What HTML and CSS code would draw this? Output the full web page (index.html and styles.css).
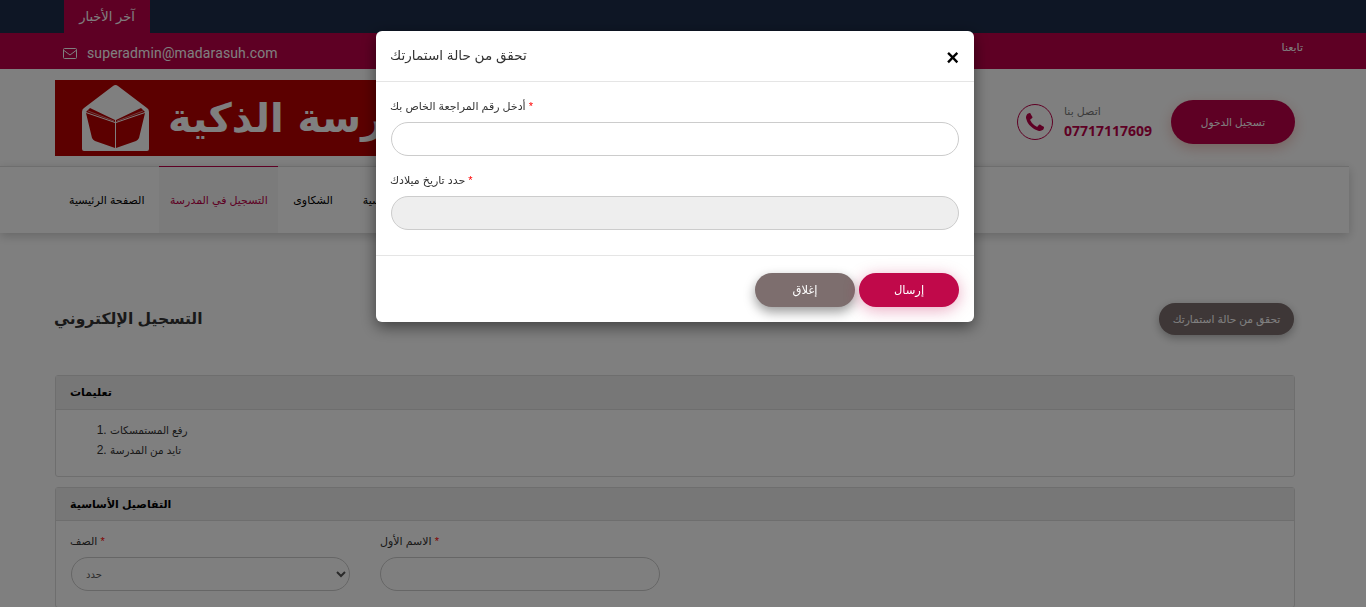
FILE: index.html
```html
<!DOCTYPE html>
<html lang="ar">
<head>
    <meta charset="UTF-8">
    <meta name="viewport" content="width=device-width, initial-scale=1.0">
    <title>التسجيل الإلكتروني</title>
    <link rel="stylesheet" href="styles.css">
</head>
<body>
    <div class="page">
        <div class="news-bar">
            <div class="news-tab">آخر الأخبار</div>
        </div>

        <div class="contact-bar">
            <div class="contact-mail">
                <svg class="mail-icon" viewBox="0 0 14 11"><rect x="0.5" y="0.5" width="13" height="10" rx="1" fill="none" stroke="currentColor"/><path d="M1 2.5 L7 7 L13 2.5" fill="none" stroke="currentColor"/></svg>
                <span>superadmin@madarasuh.com</span>
            </div>
            <div class="follow" dir="rtl">تابعنا</div>
        </div>

        <div class="header">
            <div class="logo">
                <svg class="logo-icon" viewBox="0 0 69 68">
                    <path d="M1 28 Q1 25 3 24 L32 2 Q34.5 0 37 2 L66 24 Q68 25 68 28 V65 Q68 67 66 67 H3 Q1 67 1 65 Z" fill="#fff"/>
                    <path d="M5 29 L34 39 V64 L14 57 Q12 56 11 54 Z M64 29 L35 39 V64 L55 57 Q57 56 58 54 Z" fill="#b80000"/>
                    <path d="M5 28 L9 24 L34 36 V38 Z M64 28 L60 24 L35 36 V38 Z" fill="#b80000"/>
                    <path d="M7 27 L33 37 M62 27 L36 37" stroke="#fff" stroke-width="0.5" fill="none"/>
                </svg>
                <span class="logo-text" dir="rtl">المدرسة الذكية</span>
            </div>
            <div class="header-right">
                <div class="call">
                    <span class="call-circle">
                        <svg class="call-icon" viewBox="0 0 1408 1408"><path fill="currentColor" d="M1408 1112q0 27-10 70.5t-21 68.5q-21 50-122 106-94 51-186 51-27 0-53-3.5t-57.5-12.5-47-14.5-55.5-20.5-49-18q-98-35-175-83-127-79-264-216t-216-264q-48-77-83-175-3-9-18-49t-20.5-55.5-14.5-47-12.5-57.5-3.5-53q0-92 51-186 56-101 106-122 25-11 68.5-21t70.5-10q14 0 21 3 18 6 53 76 11 19 30 54t35 63.5 31 53.5q3 4 17.5 25t21.5 35.5 7 28.5q0 20-28.5 50t-62 55-62 53-28.5 46q0 9 5 22.5t8.5 20.5 14 24 11.5 19q76 137 174 235t235 174q2 1 19 11.5t24 14 20.5 8.5 22.5 5q18 0 46-28.5t53-62 55-62 50-28.5q14 0 28.5 7t35.5 21.5 25 17.5q25 15 53.5 31t63.5 35 54 30q70 35 76 53 3 7 3 21z"/></svg>
                    </span>
                    <div class="call-text">
                        <div class="call-label" dir="rtl">اتصل بنا</div>
                        <div class="call-number">07717117609</div>
                    </div>
                </div>
                <button class="login-btn">تسجيل الدخول</button>
            </div>
        </div>

        <div class="nav">
            <a class="nav-item">الصفحة الرئيسية</a>
            <a class="nav-item active">التسجيل في المدرسة</a>
            <a class="nav-item">الشكاوى</a>
            <a class="nav-item">الرسوم الدراسية</a>
        </div>

        <div class="content">
            <div class="title-row">
                <h1 class="page-title">التسجيل الإلكتروني</h1>
                <button class="check-btn">تحقق من حالة استمارتك</button>
            </div>

            <div class="panel">
                <div class="panel-head tall">تعليمات</div>
                <div class="panel-body">
                    <ol class="steps">
                        <li><span>رفع المستمسكات</span></li>
                        <li><span>تايد من المدرسة</span></li>
                    </ol>
                </div>
            </div>

            <div class="panel">
                <div class="panel-head">التفاصيل الأساسية</div>
                <div class="panel-body fields">
                    <div class="field">
                        <label class="field-label" dir="rtl"><span class="req">*</span> الصف</label>
                        <select class="field-input field-select">
                            <option>حدد</option>
                        </select>
                    </div>
                    <div class="field">
                        <label class="field-label" dir="rtl"><span class="req">*</span> الاسم الأول</label>
                        <input class="field-input" type="text">
                    </div>
                </div>
            </div>
        </div>
    </div>

    <div class="overlay"></div>

    <div class="modal">
        <div class="modal-head">
            <div class="modal-title">تحقق من حالة استمارتك</div>
            <button class="modal-close">×</button>
        </div>
        <div class="modal-body">
            <label class="field-label" dir="rtl"><span class="req">*</span> أدخل رقم المراجعة الخاص بك</label>
            <input class="modal-input" type="text">
            <label class="field-label" dir="rtl"><span class="req">*</span> حدد تاريخ ميلادك</label>
            <input class="modal-input" type="text" disabled>
        </div>
        <div class="modal-foot">
            <button class="foot-btn close-btn">إغلاق</button>
            <button class="foot-btn send-btn">إرسال</button>
        </div>
    </div>
</body>
</html>
```

FILE: styles.css
```css
* {
    margin: 0;
    padding: 0;
    box-sizing: border-box;
}

html, body {
    height: 607px;
    overflow: hidden;
}

body {
    font-family: "Liberation Sans", "DejaVu Sans", sans-serif;
    font-size: 12px;
    color: #333;
    background: #fff;
}

button, input, select {
    font-family: inherit;
}

.page {
    width: 1349px;
}

/* top bars */
.news-bar {
    height: 33px;
    width: 1366px;
    padding-left: 64px;
    background: #1d2d4a;
}

.news-tab {
    width: 86px;
    height: 33px;
    line-height: 34px;
    text-align: center;
    font-size: 13px;
    color: #fff;
    background: #bd0048;
}

.contact-bar {
    display: flex;
    justify-content: space-between;
    align-items: center;
    width: 1366px;
    height: 36px;
    padding: 4px 63px 0;
    background: #bd0048;
    color: #fff;
}

.contact-mail {
    display: flex;
    align-items: center;
    gap: 10px;
    font-family: Roboto, sans-serif;
    font-size: 14px;
    letter-spacing: 0.13px;
}

.mail-icon {
    width: 14px;
    height: 11px;
}

.follow {
    font-size: 11px;
    margin-bottom: 12px;
}

/* header */
.header {
    display: flex;
    justify-content: space-between;
    align-items: flex-start;
    height: 97px;
    padding: 11px 54px 0 55px;
}

.logo {
    display: flex;
    align-items: center;
    width: 420px;
    height: 76px;
    padding-left: 26px;
    gap: 18px;
    background: #b80000;
    overflow: hidden;
}

.logo-icon {
    width: 69px;
    height: 68px;
    flex: none;
}

.logo-text {
    font-family: "DejaVu Sans", sans-serif;
    font-size: 40px;
    font-weight: bold;
    color: #fff;
    white-space: nowrap;
}

.header-right {
    display: flex;
    align-items: center;
    gap: 20px;
    margin-top: 20px;
}

.call {
    display: flex;
    align-items: center;
    gap: 11px;
}

.call-circle {
    display: flex;
    align-items: center;
    justify-content: center;
    width: 36px;
    height: 36px;
    border: 1px solid #bd0048;
    border-radius: 50%;
    color: #bd0048;
}

.call-icon {
    width: 18px;
    height: 18px;
}

.call-text {
    width: 87px;
}

.call-label {
    font-size: 11px;
    color: #777;
    text-align: left;
    margin-bottom: 3px;
}

.call-number {
    font-family: "Open Sans", sans-serif;
    font-size: 14px;
    font-weight: bold;
    color: #bd0048;
}

.login-btn {
    width: 124px;
    height: 44px;
    border: none;
    border-radius: 22px;
    background: #bd0048;
    color: #fff;
    font-size: 10.5px;
    box-shadow: 0 4px 14px rgba(200, 60, 40, 0.3);
}

/* nav */
.nav {
    display: flex;
    height: 67px;
    padding-left: 54px;
    border-top: 1px solid #ddd;
    background: #fff;
    box-shadow: 0 3px 10px rgba(0, 0, 0, 0.2);
}

.nav-item {
    display: block;
    padding: 0 15px;
    line-height: 66px;
    font-size: 11px;
    color: #000;
}

.nav-item.active {
    margin-top: -1px;
    height: 67px;
    padding: 0 10.5px;
    border-top: 1px solid #bd0048;
    background: #f6f6f6;
    color: #bd0048;
}

/* content */
.content {
    padding: 70px 54px 0 55px;
}

.title-row {
    display: flex;
    justify-content: space-between;
    align-items: center;
    margin-bottom: 40px;
}

.page-title {
    margin-left: -1px;
    font-size: 15.6px;
    font-weight: bold;
    color: #333;
}

.check-btn {
    width: 135px;
    height: 32px;
    margin-right: 1px;
    border: none;
    border-radius: 16px;
    background: #7d6e6e;
    color: #fff;
    font-size: 10.7px;
    box-shadow: 0 3px 10px rgba(0, 0, 0, 0.3);
}

.panel {
    margin-bottom: 10px;
    border: 1px solid #ddd;
    border-radius: 3px;
}

.panel-head {
    height: 33px;
    line-height: 32px;
    padding-left: 14px;
    border-bottom: 1px solid #ddd;
    background: #eee;
    font-size: 11px;
    font-weight: bold;
    color: #000;
}

.panel-head.tall {
    height: 34px;
}

.panel-body {
    padding: 10px 14px 16px;
}

.steps {
    padding-left: 40px;
    line-height: 20px;
    font-size: 12px;
}

.steps span {
    font-size: 10.5px;
}

.fields {
    display: flex;
    gap: 30px;
    padding-top: 12px;
}

.field {
    width: 280px;
}

.field-label {
    display: block;
    width: fit-content;
    margin-bottom: 8px;
    font-size: 11px;
    line-height: 16px;
    color: #333;
}

.req {
    color: #f00;
}

.field-input {
    display: block;
    width: 280px;
    height: 34px;
    padding: 0 10px;
    border: 1px solid #ccc;
    border-radius: 17px;
    background: #fff;
    font-size: 10px;
    color: #555;
}

.field-select {
    width: 279px;
    margin-left: 1px;
}

/* modal */
.overlay {
    position: fixed;
    top: 0;
    left: 0;
    width: 100%;
    height: 100%;
    background: rgba(0, 0, 0, 0.5);
}

.modal {
    position: fixed;
    top: 31px;
    left: 376px;
    width: 598px;
    height: 291px;
    border-radius: 6px;
    background: #fff;
    box-shadow: 0 5px 15px rgba(0, 0, 0, 0.5);
}

.modal-head {
    display: flex;
    justify-content: space-between;
    align-items: center;
    height: 51px;
    padding: 0 15px 2px 14px;
    border-bottom: 1px solid #e5e5e5;
}

.modal-title {
    font-size: 13.6px;
    color: #333;
}

.modal-close {
    border: none;
    background: none;
    font-size: 22px;
    font-weight: bold;
    line-height: 1;
    color: #000;
    margin-top: 5px;
}

.modal-body {
    height: 174px;
    padding: 16px 15px 0 14px;
    border-bottom: 1px solid #e5e5e5;
}

.modal-input {
    display: block;
    width: 568px;
    height: 34px;
    margin-left: 1px;
    margin-bottom: 16px;
    border: 1px solid #ccc;
    border-radius: 17px;
    background: #fff;
}

.modal-input:disabled {
    background: #eee;
}

.modal-foot {
    display: flex;
    justify-content: flex-end;
    gap: 4px;
    padding: 17px 15px 0 0;
}

.foot-btn {
    width: 100px;
    height: 34px;
    border: none;
    border-radius: 17px;
    color: #fff;
    font-size: 11.5px;
}

.close-btn {
    background: #7d6e6e;
    box-shadow: 0 5px 12px rgba(0, 0, 0, 0.4);
}

.send-btn {
    background: #c0094a;
    box-shadow: 0 3px 16px rgba(192, 9, 74, 0.35);
}
```
